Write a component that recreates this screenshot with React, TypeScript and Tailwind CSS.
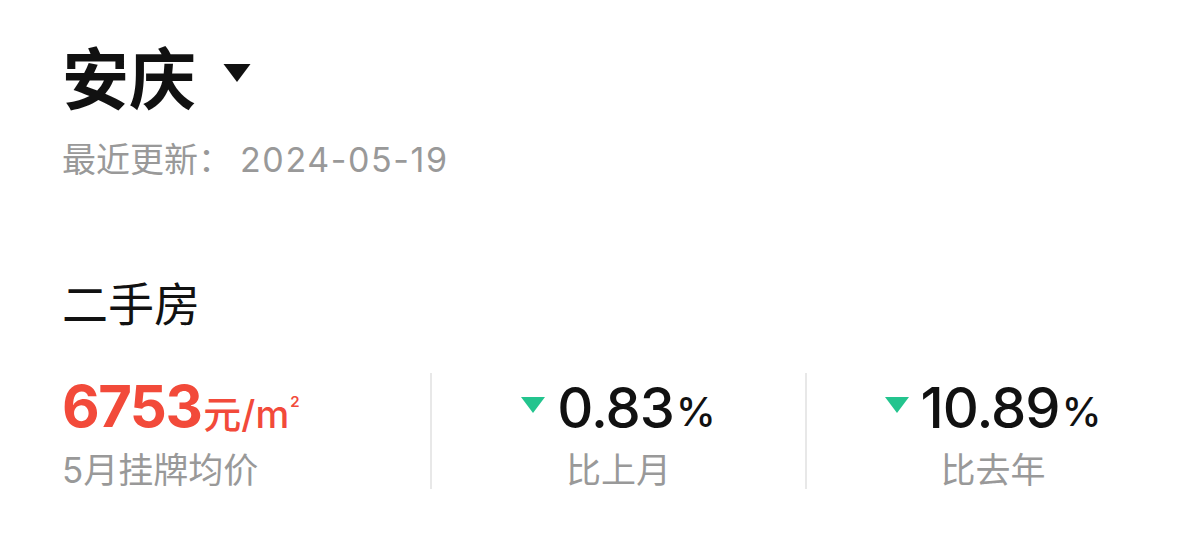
import React from "react";

const cjk = { fontFamily: '"Inter", "Noto Sans CJK SC", sans-serif' };

const DownTriangle = ({ className }: { className?: string }) => (
  <svg viewBox="0 0 24 16" className={className}>
    <path d="M0 0 L24 0 L12 16 Z" fill="currentColor" />
  </svg>
);

const Change = ({ value, label }: { value: string; label: string }) => (
  <div className="flex flex-col items-center">
    <div className="flex items-center">
      <DownTriangle className="mr-[12px] mt-[-6px] h-[16px] w-[24px] text-[#23c48e]" />
      <span className="text-[56px] font-medium leading-none tracking-[-1px] text-[#111]">
        {value}
      </span>
      <span className="ml-[2px] mt-[8px] text-[40px] font-medium leading-none text-[#111]">%</span>
    </div>
    <div className="mt-[17px] text-[35px] leading-none text-[#999]">{label}</div>
  </div>
);

export default function App() {
  return (
    <div className="h-[536px] w-[1179px] bg-white pl-[62px] pt-[46px]" style={cjk}>
      {/* 城市 */}
      <div className="flex items-center">
        <h1 className="text-[67px] font-bold leading-none text-[#111]">安庆</h1>
        <DownTriangle className="ml-[26px] mt-[-14px] h-[18px] w-[30px] text-[#111]" />
      </div>
      <div className="mt-[30px] text-[34px] leading-none text-[#999]">
        最近更新：<span className="ml-[8px] tracking-[1.6px]">2024-05-19</span>
      </div>

      <div className="mt-[104px] text-[46px] leading-none text-[#111]">二手房</div>

      <div className="mt-[46px] flex">
        <div className="w-[368px] pt-[4px]">
          <div className="flex items-end text-[#f24a3a]">
            <span className="text-[58px] font-bold leading-none tracking-[-1.5px]">6753</span>
            <span className="mb-[2px] ml-[2px] text-[38px] font-medium leading-none">元/m</span>
            <span className="mb-[26px] ml-[1px] text-[15px] font-semibold leading-none">2</span>
          </div>
          <div className="mt-[18px] text-[35px] leading-none text-[#999]">5月挂牌均价</div>
        </div>
        <div className="h-[116px] w-[375px] border-l-2 border-[#e8e8e8] pt-[7px]">
          <Change value="0.83" label="比上月" />
        </div>
        <div className="h-[116px] w-[374px] border-l-2 border-[#e8e8e8] pt-[7px]">
          <Change value="10.89" label="比去年" />
        </div>
      </div>
    </div>
  );
}
